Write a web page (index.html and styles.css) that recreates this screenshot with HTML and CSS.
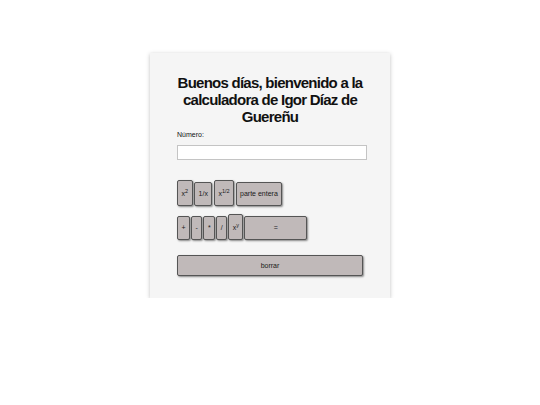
FILE: index.html
```html
<!DOCTYPE html>
<html lang="es">
<head>
<meta charset="utf-8">
<title>Calculadora</title>
<link rel="stylesheet" href="styles.css">
</head>
<body>
<div class="card">
  <h1 class="title">Buenos días, bienvenido a la calculadora de Igor Díaz de Guereñu</h1>
  <label class="label" for="num">Número:</label>
  <input class="field" id="num" type="text">
  <div class="row row1">
    <button class="btn">x<sup>2</sup></button>
    <button class="btn">1/x</button>
    <button class="btn">x<sup>1/2</sup></button>
    <button class="btn">parte entera</button>
  </div>
  <div class="row row2">
    <button class="btn">+</button>
    <button class="btn">-</button>
    <button class="btn">*</button>
    <button class="btn">/</button>
    <button class="btn">x<sup>y</sup></button>
    <button class="btn eq">=</button>
  </div>
  <button class="btn clear">borrar</button>
</div>
</body>
</html>
```
FILE: styles.css
```css
html, body {
  margin: 0;
  padding: 0;
  background: #ffffff;
  font-family: "Liberation Sans", Arial, sans-serif;
}
body {
  padding-top: 53px;
}
.card {
  width: 240px;
  margin-left: 150px;
  box-sizing: border-box;
  background: #f5f5f5;
  padding: 21px 23px 22px 27px;
  box-shadow: 0 1px 4px rgba(0,0,0,0.25);
}
.title {
  margin: 0 -4px 0 -8px;
  font-size: 15px;
  line-height: 17px;
  letter-spacing: -0.75px;
  font-weight: bold;
  text-align: center;
  color: #111;
}
.label {
  display: block;
  margin-top: 6px;
  font-size: 7px;
  color: #111;
}
.field {
  display: block;
  margin-top: 7px;
  width: 190px;
  height: 15px;
  box-sizing: border-box;
  border: 1px solid #c4c4c4;
  background: #fff;
  padding: 0;
}
.row {
  display: flex;
  align-items: baseline;
}
.row1 { margin-top: 20px; gap: 1.5px; }
.row2 { margin-top: 8px; gap: 1px; }
.btn {
  font-family: "Liberation Sans", Arial, sans-serif;
  font-size: 7px;
  line-height: 8px;
  color: #1a1a1a;
  background: #c0b9b9;
  border: 1px solid #555;
  border-radius: 2px;
  box-shadow: 1px 1px 2px rgba(0,0,0,0.45);
  padding: 7px 3.5px;
  margin: 0;
}
.btn sup {
  font-size: 5.5px;
  line-height: 6px;
  vertical-align: 3px;
}
.eq {
  width: 63px;
}
.clear {
  display: block;
  margin-top: 15px;
  width: 186px;
  height: 21px;
  padding: 0;
}
```
